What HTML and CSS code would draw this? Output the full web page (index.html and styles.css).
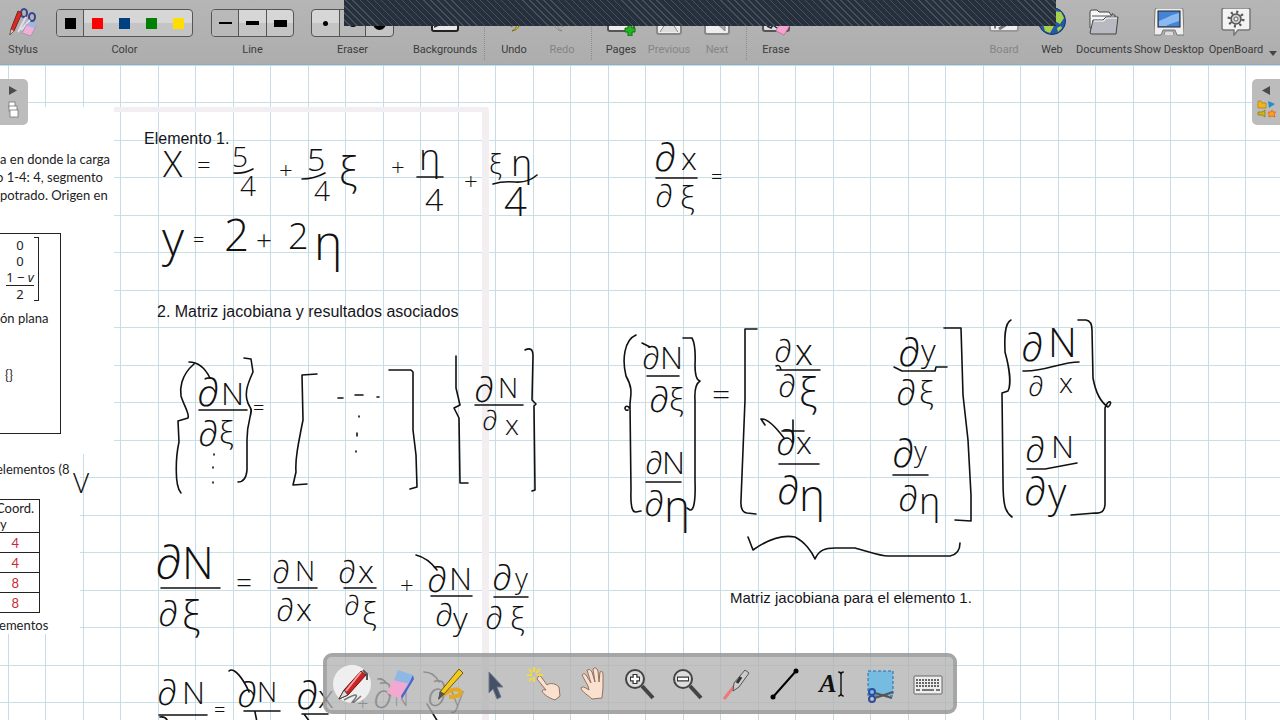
FILE: index.html
```html
<!DOCTYPE html>
<html lang="es">
<head>
<meta charset="utf-8">
<title>OpenBoard</title>
<link rel="stylesheet" href="styles.css">
</head>
<body>
<header class="toolbar">
  <button class="tool w46"><svg class="icon" viewBox="0 0 28 28"><g fill="none" stroke="#33458f" stroke-width="2"><ellipse cx="15" cy="5" rx="3" ry="4"/><ellipse cx="23" cy="9" rx="3" ry="4"/></g><path d="M17 9 9 24M21 12 12 22" stroke="#dde" stroke-width="2"/><path d="M9 3 13 5 5 23 1 27 2 21Z" fill="#d92b25" stroke="#7d2020"/><path d="M1 27 2 21 5 23Z" fill="#eed0a8" stroke="#555" stroke-width=".6"/><path d="M18 16 27 18 22 28 13 25Z" fill="#efb0d5" stroke="#a883ad" stroke-width=".7"/><path d="M20 14 27 16 26 20 18 18Z" fill="#9bb7e6"/></svg><span>Stylus</span></button>
  <div class="group g-color">
    <div class="segments"><button class="on" aria-label="Black"><i class="sw black"></i></button><button aria-label="Red"><i class="sw red"></i></button><button aria-label="Blue"><i class="sw blue"></i></button><button aria-label="Green"><i class="sw green"></i></button><button aria-label="Yellow"><i class="sw yellow"></i></button></div>
    <span>Color</span>
  </div>
  <div class="group">
    <div class="segments lined"><button class="on" aria-label="Thin"><i class="ln thin"></i></button><button aria-label="Medium"><i class="ln mid"></i></button><button aria-label="Thick"><i class="ln thick"></i></button></div>
    <span>Line</span>
  </div>
  <div class="group">
    <div class="segments lined"><button aria-label="Small"><i class="dot small"></i></button><button class="on" aria-label="Medium eraser"><i class="dot medium"></i></button><button aria-label="Large"><i class="dot large"></i></button></div>
    <span>Eraser</span>
  </div>
  <button class="tool w68"><svg class="icon" viewBox="0 0 28 28"><rect x="1" y="3" width="26" height="20" rx="2" fill="#e8e8e8" stroke="#222" stroke-width="2"/><path d="M3 20 25 10V5H3Z" fill="#333"/></svg><span>Backgrounds</span></button>
  <hr class="sep">
  <button class="tool"><svg class="icon" viewBox="0 0 28 28"><path d="M12 23C22 21 22 10 12 9V4L4 12 12 19V14C18 14 18 20 12 23Z" fill="#f3d22c" stroke="#806b16"/></svg><span>Undo</span></button>
  <button class="tool off"><svg class="icon" viewBox="0 0 28 28"><path d="M14 23C4 21 4 10 14 9V4L22 12 14 19V14C8 14 8 20 14 23Z" fill="#ccc" stroke="#888"/></svg><span>Redo</span></button>
  <hr class="sep">
  <button class="tool"><svg class="icon" viewBox="0 0 28 28"><rect x="1" y="3" width="26" height="20" rx="2" fill="#eee" stroke="#555" stroke-width="2"/><path d="M21 17h4v3h3v4h-3v4h-4v-4h-3v-4h3Z" fill="#22b522" stroke="#137013"/></svg><span>Pages</span></button>
  <button class="tool off"><svg class="icon" viewBox="0 0 28 28"><rect x="2" y="3" width="24" height="23" rx="2" fill="#eee" stroke="#888" stroke-width="2"/><path d="M5 24 14 10 23 24" fill="#ddd" stroke="#888"/></svg><span>Previous</span></button>
  <button class="tool off"><svg class="icon" viewBox="0 0 28 28"><rect x="2" y="3" width="24" height="23" rx="2" fill="#eee" stroke="#888" stroke-width="2"/><path d="M10 12 22 23V10Z" fill="#aaa" stroke="#888"/></svg><span>Next</span></button>
  <hr class="sep">
  <button class="tool"><svg class="icon" viewBox="0 0 28 28"><rect x="1" y="3" width="26" height="20" rx="2" fill="#ddd" stroke="#555" stroke-width="2"/><path d="M5 18l4 2 2-3 4 3" stroke="#224" fill="none" stroke-width="1.5"/><path d="M19 13 28 17 22 27 14 23Z" fill="#f4a4cd" stroke="#c573a2"/></svg><span>Erase</span></button>
  <div class="spacer"></div>
  <button class="tool off"><svg class="icon" viewBox="0 0 28 28"><rect x="0" y="3" width="28" height="20" rx="2" fill="#eee" stroke="#999" stroke-width="2"/><path d="M9 21 17 16 M4 19h2" stroke="#777" stroke-width="3"/></svg><span>Board</span></button>
  <button class="tool"><svg class="icon" viewBox="0 0 28 28"><circle cx="14" cy="13" r="13.500" fill="#2459a8" stroke="#173467"/><path d="M16 3 23 4 26 10 22 16 17 13 15 8ZM5 16 12 14 16 18 12 25 7 23Z M19 20l4-2 1 2-4 4Z" fill="#a7d04b"/></svg><span>Web</span></button>
  <button class="tool w56"><svg class="icon" viewBox="0 0 30 28"><path d="M1 4Q1 2 3 2H8L10 4H20L22 7H26V20H1Z" fill="#f6f6f6" stroke="#444"/><path d="M3 8H22L24 5" fill="none" stroke="#555"/><path d="M1 25 4 12H14L17 9H29L27 26H2Z" fill="#b9b9c2" stroke="#444"/><path d="M5 13H15L17 10H28" stroke="#fff" fill="none"/></svg><span>Documents</span></button>
  <button class="tool w74"><svg class="icon" viewBox="0 0 30 28"><path d="M3 0H27Q29 0 29 2L30 27H23L21 22H9L7 27H0L1 2Q1 0 3 0Z" fill="#eee" stroke="#777"/><rect x="4" y="3" width="22" height="16" fill="#4384d5" stroke="#222"/><path d="M5 18V13L12 10 18 7 25 5V13L16 16 12 18Z" fill="#8bb9f0"/><path d="M10 27 11 23H19L20 27" fill="#ddd" stroke="#888"/></svg><span>Show Desktop</span></button>
  <button class="tool w60"><svg class="icon" viewBox="0 0 30 28"><path d="M3 0H27Q29 0 29 2V20Q29 22 27 22H17L13 27V22H3Q1 22 1 20V2Q1 0 3 0Z" fill="#f3f3f3" stroke="#777" stroke-width="1.500"/><circle cx="15" cy="11" r="7" fill="none" stroke="#555" stroke-width="3" stroke-dasharray="2 3.500"/><circle cx="15" cy="11" r="5" fill="#ccc" stroke="#555" stroke-width="1.500"/><circle cx="15" cy="11" r="2" fill="#eee" stroke="#666"/></svg><span>OpenBoard</span></button>
  <button class="more" aria-label="More"><svg width="8" height="5" viewBox="0 0 8 5"><path d="M0 0H8L4 5Z" fill="#444"/></svg></button>
  <div class="banner"></div>
</header>

<main class="board">
  <div class="frame"></div>
  <article class="sheet">
    <div class="sheet-body">
      <p class="intro">a en donde la carga<br><span class="cut">o 1-4: 4, segmento</span><br>potrado. Origen en</p>
      <section class="box">
        <div class="matrix"><span>0</span><span>0</span><span class="num">1 − <em>v</em></span><span>2</span></div>
        <p class="plane">ón plana</p>
        <p class="braces">{}</p>
      </section>
    </div>
    <div class="sheet-foot">
      <p class="cut">elementos (8</p>
      <table class="coords">
        <thead><tr><th>Coord.<br>y</th></tr></thead>
        <tbody><tr><td>4</td></tr><tr><td>4</td></tr><tr><td>8</td></tr><tr><td>8</td></tr></tbody>
      </table>
      <p class="cut">lementos</p>
    </div>
  </article>

  <p class="note n1">Elemento 1.</p>
  <p class="note n2">2. Matriz jacobiana y resultados asociados</p>
  <p class="note small-note n3">Matriz jacobiana para el elemento 1.</p>

  <svg class="ink" aria-label="Ecuaciones">
    <g transform="translate(0 -65)">
      <g class="pen">
        <path d="M234 173Q244 174 253 169M302 179Q314 179 325 173M417 177H443M493 184Q502 181 515 182T537 175M656 178H697"/>
        <path d="M189 362Q202 362 210 378M194 364C180 376 180 390 181 396C184 406 190 414 188 418L178 421 179 442C176 455 174 485 181 493M199 410H247M244 358 251 359 253 372C247 385 243 396 250 407C254 412 247 418 247 440V470Q246 482 238 482"/>
        <path d="M317 374 302 375 303 420C298 445 295 460 296 472L293 485 307 484M389 370H411L413 372V430L416 455 417 487 410 489M338 398h5M355 395h8M377 397h2M359 416v1M357 433v3M356 451v1M214 454v1M213 467v1M213 482v1"/>
        <path d="M456 356V388L460 405 454 408 459 418 460 483 468 483M525 350Q533 346 533 356L532 400 536 404 534 406 535 490 532 491M475 405H523"/>
        <path d="M161 588H220M278 588H317M344 588H376M416 555Q428 558 437 570M431 596H472M494 597H528M159 715H207M229 671C234 666 244 680 249 692M244 711H280M302 714H328M160 717Q166 716 168 722M255 712 257 722M304 714 310 722M378 679Q383 678 386 683M424 672Q434 672 439 682M427 704 438 722"/>
        <path d="M636 335C624 340 622 360 626 376C634 390 630 396 630 405L631 490Q630 513 636 512L641 511M629 408a2 2 0 1 0-1 2M642 343 650 347M647 376H679M646 482H681M683 338H692Q696 345 695 365Q695 380 700 381Q694 385 695 400V480Q696 511 690 510L687 508"/>
        <path d="M757 329H745V400L741 500Q740 512 747 513L756 514M776 366Q780 364 781 370M777 370H820M779 464H819M765 425 761 419Q769 418 784 438M748 537 753 550C770 538 785 535 795 537C805 542 812 552 815 559C819 550 825 548 835 548H855C870 552 880 556 888 556H950Q960 554 960 543"/>
        <path d="M894 367 902 371 935 371 936 367H947M893 475H928M944 328H961L963 395 968 440 971 495V521L955 520"/>
        <path d="M1011 320C1003 324 1005 345 1005 352C1010 370 1011 385 1008 391L1002 393 1003 480C1003 505 1005 512 1012 517M1023 371C1045 372 1060 362 1079 362M1027 469H1045L1077 463M1078 320H1086Q1092 321 1092 330L1093 378C1096 395 1102 403 1108 407C1114 402 1108 398 1105 408V505Q1104 514 1095 513L1071 515"/>
        <path class="cursor" d="M782 431H804M793 420V442"/>
      </g>
      <g class="hand">
        <text class="s36" x="163" y="177">X</text><text class="s24" x="197" y="174">=</text><text class="s28" x="232" y="167">5</text><text class="s28" x="240" y="196">4</text>
        <text class="s24" x="279" y="179">+</text><text class="s32" x="307" y="171">5</text><text class="s28" x="314" y="201">4</text><text class="s40" x="339" y="186">ξ</text>
        <text class="s24" x="391" y="176">+</text><text class="s36" x="419" y="170">η</text><text class="s32" x="425" y="211">4</text>
        <text class="s24" x="464" y="190">+</text><text class="s28" x="489" y="174">ξ</text><text class="s36" x="511" y="176">η</text><text class="s40" x="504" y="216">4</text>
        <text class="s40" x="654" y="171">∂</text><text class="s32" x="681" y="170">x</text><text class="s32" x="655" y="207">∂</text><text class="s32" x="680" y="209">ξ</text><text class="s20" x="711" y="184">=</text>
        <text class="s48" x="162" y="256">y</text><text class="s20" x="193" y="247">=</text><text class="s44" x="224" y="251">2</text><text class="s28" x="256" y="250">+</text><text class="s36" x="288" y="249">2</text><text class="s48" x="314" y="260">η</text>
        <text class="s40" x="197" y="406">∂</text><text class="s32" x="221" y="405">N</text><text class="s36" x="198" y="446">∂</text><text class="s32" x="219" y="444">ξ</text><text class="s20" x="253" y="415">=</text>
        <text class="s36" x="474" y="402">∂</text><text class="s28" x="498" y="398">N</text><text class="s28" x="482" y="430">∂</text><text class="s28" x="505" y="435">x</text>
        <text class="s28" x="73" y="493">V</text>
        <text class="s48" x="155" y="579">∂</text><text class="s44" x="182" y="579">N</text><text class="s36" x="158" y="626">∂</text><text class="s40" x="182" y="630">ξ</text><text class="s28" x="236" y="593">=</text>
        <text class="s32" x="272" y="583">∂</text><text class="s28" x="295" y="581">N</text><text class="s32" x="276" y="621">∂</text><text class="s32" x="296" y="621">x</text>
        <text class="s32" x="338" y="583">∂</text><text class="s32" x="358" y="583">x</text><text class="s28" x="344" y="615">∂</text><text class="s32" x="362" y="625">ξ</text><text class="s24" x="400" y="594">+</text>
        <text class="s36" x="427" y="592">∂</text><text class="s32" x="449" y="590">N</text><text class="s32" x="435" y="626">∂</text><text class="s32" x="453" y="630">y</text>
        <text class="s36" x="492" y="590">∂</text><text class="s28" x="515" y="588">y</text><text class="s32" x="485" y="629">∂</text><text class="s32" x="510" y="630">ξ</text>
        <text class="s36" x="157" y="705">∂</text><text class="s32" x="182" y="704">N</text><text class="s20" x="214" y="717">=</text><text class="s36" x="237" y="707">∂</text><text class="s28" x="257" y="702">N</text><text class="s40" x="296" y="709">∂</text><text class="s32" x="318" y="708">x</text>
        <text class="s20" x="357" y="711">+</text><text class="s36" x="373" y="708">∂</text><text class="s20" x="394" y="706">N</text><text class="s36" x="427" y="706">∂</text><text class="s28" x="451" y="706">y</text>
        <text class="s32" x="642" y="369">∂</text><text class="s32" x="660" y="369">N</text><text class="s36" x="649" y="412">∂</text><text class="s32" x="669" y="411">ξ</text><text class="s32" x="645" y="474">∂</text><text class="s32" x="662" y="474">N</text><text class="s36" x="644" y="516">∂</text><text class="s44" x="664" y="522">η</text><text class="s32" x="712" y="405">=</text>
        <text class="s32" x="774" y="362">∂</text><text class="s36" x="795" y="365">x</text><text class="s32" x="778" y="397">∂</text><text class="s40" x="799" y="407">ξ</text><text class="s36" x="776" y="455">∂</text><text class="s32" x="796" y="454">x</text><text class="s40" x="777" y="504">∂</text><text class="s44" x="799" y="511">η</text>
        <text class="s40" x="898" y="366">∂</text><text class="s32" x="921" y="362">y</text><text class="s36" x="896" y="405">∂</text><text class="s32" x="919" y="404">ξ</text><text class="s40" x="892" y="467">∂</text><text class="s28" x="914" y="461">y</text><text class="s36" x="898" y="511">∂</text><text class="s36" x="919" y="514">η</text>
        <text class="s40" x="1021" y="361">∂</text><text class="s40" x="1048" y="357">N</text><text class="s28" x="1028" y="396">∂</text><text class="s28" x="1059" y="393">x</text><text class="s36" x="1025" y="462">∂</text><text class="s32" x="1051" y="458">N</text><text class="s40" x="1024" y="505">∂</text><text class="s40" x="1048" y="507">y</text>
      </g>
    </g>
  </svg>

  <button class="tab left" aria-label="Pages panel"><svg width="28" height="46" viewBox="0 0 28 46"><path d="M9 7 17 11.500 9 16Z" fill="#4c4c4c"/><g fill="#fff" stroke="#777" stroke-width=".8"><rect x="9" y="23" width="6" height="5"/><rect x="9" y="27" width="8" height="5"/><rect x="10" y="31" width="8" height="7"/></g></svg></button>
  <button class="tab right" aria-label="Library panel"><svg width="28" height="46" viewBox="0 0 28 46"><path d="M18 7 10 11.500 18 16Z" fill="#4c4c4c"/><path d="M6 22h3l1 2h4v5H6Z" fill="#f0b51b" stroke="#a87c12" stroke-width=".7"/><path d="M16 22 23 25 17 29Z" fill="#248cc7"/><path d="M13 31v7l-3-2H6v-3h4Z" fill="#d3b416" stroke="#887316" stroke-width=".7"/><path d="m20 31 1 2 3 0-2 2 1 3-3-1-3 1 0-3-1-2 3 0Z" fill="#ff9d24" stroke="#dc6a11" stroke-width=".8"/></svg></button>

  <nav class="palette" aria-label="Stylus palette">
    <button aria-label="Pen"><svg viewBox="0 0 38 38"><circle cx="19" cy="19" r="19" fill="#efefef"/><path d="M11 35Q29 25 21 35T28 31" fill="none" stroke="#777" stroke-width="1.500"/><path d="M28 6 33 10 15 30 6 34 11 25Z" fill="#c92323" stroke="#711"/><path d="M28 7 13 26" stroke="#f1a1a1" stroke-width="2"/><path d="M11 25 15 30 6 34Z" fill="#ddd" stroke="#444"/><path d="M30 5 34 9V15" fill="none" stroke="#555" stroke-width="2"/></svg></button>
    <button aria-label="Eraser"><svg viewBox="0 0 38 38"><path d="M17 5 32 10 24 24 11 20Z" fill="#8fb9e4"/><path d="M12 15 28 19 20 34 6 28Z" fill="#f3a8d0"/><path d="m32 10 1 4-12 20-1-3 8-13Z" fill="#4669ce"/></svg></button>
    <button aria-label="Marker"><svg viewBox="0 0 38 38"><path d="M14 30Q27 21 31 26T20 32" fill="none" stroke="#e5a81e" stroke-width="4"/><path d="M30 4 34 8 15 29 10 34 11 27Z" fill="#f4cb19" stroke="#6c5913"/><path d="M11 26 16 29 9 35Z" fill="#555"/></svg></button>
    <button aria-label="Select"><svg viewBox="0 0 38 38"><path d="M12 7V28L16 24 20 34 24 32 20 22H26Z" fill="#465166" stroke="#727b8c"/></svg></button>
    <button aria-label="Play"><svg viewBox="0 0 38 38"><path d="M13 12Q15 9 17 13L22 20C26 17 31 19 34 22L35 31 30 35C24 33 19 30 17 26Q18 24 21 25L12 14Z" fill="#fae0cf" stroke="#93715f"/><path d="M9 2V7M9 12V17M2 10H7M12 10H18M4 4 7 8M15 4 11 8M4 16 7 13" stroke="#f2dc35" stroke-width="2"/></svg></button>
    <button aria-label="Hand"><svg viewBox="0 0 38 38"><path d="M15 21 9 10Q11 7 13 10L18 18 14 5Q17 3 19 7L22 17 20 4Q23 1 25 6L26 17 27 7Q30 5 30 10V23L29 33 19 34C15 30 9 27 8 23Q9 20 16 25Z" fill="#fae0cf" stroke="#93715f"/></svg></button>
    <button aria-label="Zoom in"><svg viewBox="0 0 38 38"><path d="M21 21 32 33" stroke="#444" stroke-width="4"/><circle cx="14" cy="14" r="9" fill="#ddd" stroke="#444" stroke-width="2"/><path d="M9 14H19M14 9V19" stroke="#333" stroke-width="5"/><path d="M10 14H18M14 10V18" stroke="#fff" stroke-width="2.500"/></svg></button>
    <button aria-label="Zoom out"><svg viewBox="0 0 38 38"><path d="M21 21 32 33" stroke="#444" stroke-width="4"/><circle cx="14" cy="14" r="9" fill="#ddd" stroke="#444" stroke-width="2"/><path d="M8 14H20" stroke="#333" stroke-width="5"/><path d="M9 14H19" stroke="#fff" stroke-width="2.500"/></svg></button>
    <button aria-label="Laser pointer"><svg viewBox="0 0 38 38"><path d="M7 34 19 19" stroke="#ee7777" stroke-width="3"/><path d="M28 5 32 8 22 22 16 26 17 18Z" fill="#ccc" stroke="#555"/><path d="M24 12 20 18" stroke="#333" stroke-width="3"/></svg></button>
    <button aria-label="Line"><svg viewBox="0 0 38 38"><path d="M8 32 31 6" stroke="#000" stroke-width="2"/><circle cx="8" cy="32" r="2.500"/><circle cx="31" cy="6" r="2.500"/></svg></button>
    <button class="text-tool" aria-label="Text"><b>A</b><svg class="ibeam" viewBox="0 0 8 28"><path d="M1 1Q4 1 4 4V24Q4 27 1 27M7 1Q4 1 4 4M4 24Q4 27 7 27" fill="none" stroke="#111" stroke-width="1.500"/></svg></button>
    <button aria-label="Capture"><svg viewBox="0 0 38 38"><rect x="7" y="6" width="25" height="25" fill="#75bce0" stroke="#256bb0" stroke-dasharray="3 2"/><g fill="none" stroke="#314ba0" stroke-width="2"><circle cx="11" cy="27" r="3"/><circle cx="11" cy="34" r="3"/></g><path d="M14 28 31 33M14 33 32 27" stroke="#555" stroke-width="2"/></svg></button>
    <button aria-label="Keyboard"><svg viewBox="0 0 38 38"><rect x="5" y="11" width="28" height="18" rx="1" fill="#eee" stroke="#666"/><path d="M7 15H31M7 18H31M7 21H31" stroke="#666" stroke-width="2" stroke-dasharray="2 1"/><path d="M7 25H11M13 25H25M27 25H31" stroke="#777" stroke-width="2"/></svg></button>
  </nav>
</main>
</body>
</html>
```
FILE: styles.css
```css
* { box-sizing: border-box; }
body { margin: 0; height: 100vh; display: flex; flex-direction: column; overflow: hidden; background: #fff; font-family: "Liberation Sans", Arial, sans-serif; }
button { margin: 0; padding: 0; border: 0; background: none; font: inherit; color: inherit; }
p { margin: 0; }

.toolbar { position: relative; display: flex; align-items: flex-start; padding: 8px 0 4px; background: linear-gradient(#b6b6b6, #adadad); border-bottom: 1px solid #8eacbd; font: 11px/16px Roboto, "Noto Sans", sans-serif; color: #3c3c3c; }
.tool { width: 48px; display: flex; flex-direction: column; align-items: center; gap: 6px; white-space: nowrap; }
.tool span, .group > span { height: 16px; }
.icon { width: 30px; height: 28px; }
.w46 { width: 46px; }
.w56 { width: 56px; }
.w60 { width: 60px; }
.w68 { width: 68px; }
.w74 { width: 74px; }
.off { color: #858585; }
.spacer { flex: 1; }
.sep { width: 0; height: 52px; margin: 0 5px; border: 0; border-left: 1px dotted #8c8c8c; }
.group { display: flex; flex-direction: column; align-items: center; gap: 5px; margin-right: 17px; padding-top: 1px; }
.g-color { margin-left: 10px; margin-right: 18px; }
.segments { display: flex; height: 28px; overflow: hidden; border: 1px solid #555; border-radius: 4px; background: linear-gradient(#d6d6d6 48%, #c4c4c4 52%); }
.segments button { width: 27px; display: flex; align-items: center; justify-content: center; }
.segments .on { background: #b9b9b9; border-right: 1px solid #555; }
.lined button + button { border-left: 1px solid #555; border-right: 0; }
.lined .on + button { border-left: 0; }
.sw { width: 11px; height: 11px; }
.black { background: #000; }
.red { background: #fe0000; }
.blue { background: #004080; }
.green { background: #008000; }
.yellow { background: #ffdd00; }
.ln { width: 13px; background: #000; }
.thin { height: 2px; }
.mid { height: 4px; }
.thick { height: 7px; }
.dot { border-radius: 50%; background: #000; }
.small { width: 5px; height: 5px; }
.medium { width: 8px; height: 8px; }
.large { width: 13px; height: 13px; }
.more { width: 14px; height: 50px; display: flex; align-items: flex-end; justify-content: center; padding-bottom: 2px; }
.banner { position: absolute; top: 0; left: 344px; right: 224px; height: 26px; background: repeating-linear-gradient(45deg, #26303c 0 4px, #46505b 4px 5px); }

.board { position: relative; flex: 1; min-height: 0; overflow: hidden; background-color: #fff; background-image: linear-gradient(90deg, #c7dce7 1px, transparent 1px), linear-gradient(90deg, #c7dce7 1px, transparent 1px), linear-gradient(#c7dfe5 1px, transparent 1px), linear-gradient(#c7dfe5 1px, transparent 1px); background-size: 75px 75px; background-position: 8px 0, 45px 0, 0 37px, 0 0; }
.frame { position: absolute; top: 42px; left: 28px; width: 461px; bottom: 0; border: solid #f2eef2; border-width: 5px 7px 0 0; border-radius: 0 4px 0 0; }
.sheet { position: absolute; top: 42px; left: 0; width: 114px; font: 13px/18px Lato, "Open Sans", sans-serif; color: #222; }
.sheet-body { height: 347px; padding-top: 43px; background: #fff; white-space: nowrap; overflow: hidden; }
.sheet-foot { width: 80px; padding: 6px 0 0; background: #fff; overflow: hidden; }
.cut { margin-left: -4px; white-space: nowrap; }
.box { width: 61px; height: 201px; margin-top: 29px; border: 1px solid #222; border-left: 0; }
.matrix { position: relative; width: 39px; height: 64px; margin-top: 3px; padding-left: 2px; display: flex; flex-direction: column; align-items: center; border-right: 1px solid #222; font: 13px/16px "Noto Sans", sans-serif; }
.matrix::before, .matrix::after { content: ""; position: absolute; right: 0; width: 4px; height: 1px; background: #222; }
.matrix::before { top: 0; }
.matrix::after { bottom: 0; }
.num { border-bottom: 1px solid #222; }
.plane { margin-top: 8px; }
.braces { margin: 39px 0 0 5px; }
.coords { width: 40px; margin: 21px 0 3px; border-collapse: collapse; line-height: 16px; }
.coords th, .coords td { border: 1px solid #222; border-left: 0; padding: 0; height: 20px; }
.coords th { font-weight: normal; text-align: left; line-height: 16px; text-indent: -4px; }
.coords td { padding-right: 20px; text-align: right; color: #c92a35; }

.note { position: absolute; font-size: 16px; line-height: 20px; color: #151520; white-space: nowrap; }
.small-note { font-size: 15px; }
.n1 { left: 144px; top: 64px; }
.n2 { left: 157px; top: 237px; }
.n3 { left: 730px; top: 523px; }

.ink { position: absolute; inset: 0; width: 100%; height: 100%; }
.pen { fill: none; stroke: #111; stroke-width: 1.6; stroke-linecap: round; stroke-linejoin: round; }
.hand { fill: #111; font-family: "Open Sans", "DejaVu Sans", sans-serif; font-weight: 300; }
.s20 { font-size: 20px; }
.s24 { font-size: 24px; }
.s28 { font-size: 28px; }
.s32 { font-size: 32px; }
.s36 { font-size: 36px; }
.s40 { font-size: 40px; }
.s44 { font-size: 44px; }
.s48 { font-size: 48px; }

.tab { position: absolute; top: 14px; width: 28px; height: 46px; background: #bcbcbc; }
.left { left: 0; border-radius: 0 5px 5px 0; }
.right { right: 0; border-radius: 5px 0 0 5px; }

.palette { position: absolute; left: 50%; bottom: 6px; transform: translateX(-50%); display: flex; padding: 6px 1px; border: 4px solid rgba(150, 150, 150, .85); border-radius: 9px; background: rgba(178, 178, 178, .78); background-clip: padding-box; }
.palette button { width: 48px; height: 41px; display: flex; align-items: center; justify-content: center; }
.palette svg { width: 38px; height: 38px; }
.palette .text-tool { font: 26px/30px "Liberation Serif", serif; font-style: italic; color: #111; }
.palette .ibeam { width: 8px; height: 26px; }
```
